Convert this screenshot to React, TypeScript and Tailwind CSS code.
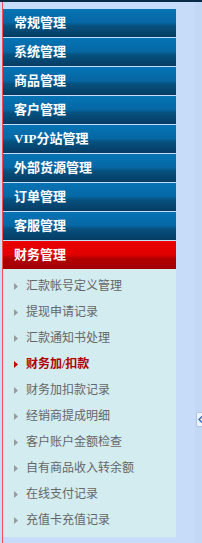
import React from "react";

const headers = [
  "常规管理",
  "系统管理",
  "商品管理",
  "客户管理",
  "VIP分站管理",
  "外部货源管理",
  "订单管理",
  "客服管理",
];

const items = [
  "汇款帐号定义管理",
  "提现申请记录",
  "汇款通知书处理",
  "财务加/扣款",
  "财务加扣款记录",
  "经销商提成明细",
  "客户账户金额检查",
  "自有商品收入转余额",
  "在线支付记录",
  "充值卡充值记录",
];

const font = { fontFamily: '"Liberation Serif","Noto Sans CJK SC",serif' };

export default function App() {
  return (
    <div className="w-[202px] h-[543px] bg-[#c7dcf8] flex flex-col overflow-hidden relative">
      <div className="h-[2px] bg-[#0b2a48] shrink-0" />
      <div className="flex flex-1 min-h-0">
        <div className="w-[2px] shrink-0" />
        <div className="w-px bg-[#f05050] shrink-0" />
        <div className="w-[173px] shrink-0 pt-[7px] flex flex-col gap-px">
          {headers.map((h) => (
            <div
              key={h}
              className="h-[28px] flex items-center pl-[11px] text-white font-bold text-[13px] bg-[linear-gradient(to_bottom,#0674b5_0%,#0667a4_48%,#07517f_60%,#053c64_100%)]"
              style={font}
            >
              {h}
            </div>
          ))}
          <div
            className="h-[28px] flex items-center pl-[11px] text-white font-bold text-[13px] bg-[linear-gradient(to_bottom,#ea0000_0%,#e20000_48%,#b40000_62%,#a20000_100%)]"
            style={font}
          >
            财务管理
          </div>
          <div className="-mt-px bg-[#d3ecf0] py-[4px] flex flex-col">
            {items.map((t, i) => {
              const active = i === 3;
              return (
                <div key={t} className="h-[26px] flex items-center pl-[11px]">
                  <svg width="4" height="7" viewBox="0 0 4 7" className="shrink-0">
                    <polygon points="0,0 4,3.5 0,7" fill={active ? "#d00000" : "#9a9a9a"} />
                  </svg>
                  <span
                    className={
                      "ml-[8px] text-[12px] leading-none " +
                      (active ? "text-[#b00000] font-bold" : "text-[#666666]")
                    }
                    style={font}
                  >
                    {t}
                  </span>
                </div>
              );
            })}
          </div>
        </div>
        <div className="flex-1" />
        <div className="w-[7px] bg-[#c3d8f4] shrink-0" />
      </div>
      <div className="absolute left-[196px] top-[412px] w-[8px] h-[15px] bg-[#eef4fc] border border-[#b0c4de] rounded-[2px] flex items-center pl-[1px]">
        <svg width="5" height="7" viewBox="0 0 5 7">
          <polyline points="4,0.5 1,3.5 4,6.5" fill="none" stroke="#3a6fb8" strokeWidth="1.5" />
        </svg>
      </div>
    </div>
  );
}
